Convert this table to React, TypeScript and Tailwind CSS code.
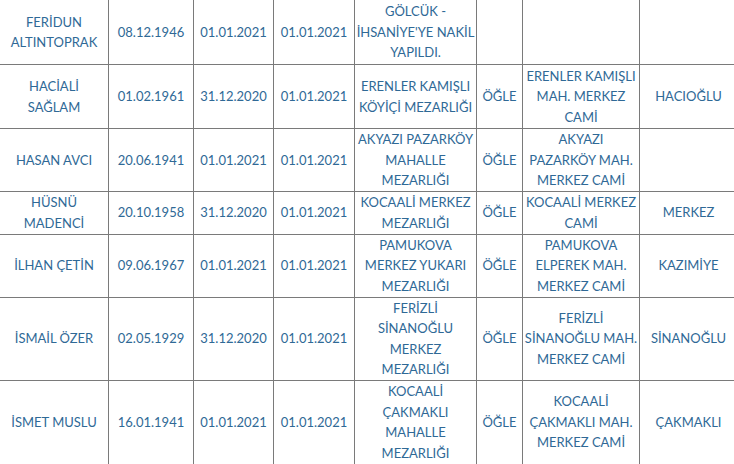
import React from "react";

const rows: { h: number; c: string[] }[] = [
  { h: 65, c: ["FERİDUN ALTINTOPRAK", "08.12.1946", "01.01.2021", "01.01.2021", "GÖLCÜK - İHSANİYE'YE NAKİL YAPILDI.", "", "", ""] },
  { h: 64, c: ["HACİALİ SAĞLAM", "01.02.1961", "31.12.2020", "01.01.2021", "ERENLER KAMIŞLI KÖYİÇİ MEZARLIĞI", "ÖĞLE", "ERENLER KAMIŞLI MAH. MERKEZ CAMİ", "HACIOĞLU"] },
  { h: 62, c: ["HASAN AVCI", "20.06.1941", "01.01.2021", "01.01.2021", "AKYAZI PAZARKÖY MAHALLE MEZARLIĞI", "ÖĞLE", "AKYAZI PAZARKÖY MAH. MERKEZ CAMİ", ""] },
  { h: 43, c: ["HÜSNÜ MADENCİ", "20.10.1958", "31.12.2020", "01.01.2021", "KOCAALİ MERKEZ MEZARLIĞI", "ÖĞLE", "KOCAALİ MERKEZ CAMİ", "MERKEZ"] },
  { h: 63, c: ["İLHAN ÇETİN", "09.06.1967", "01.01.2021", "01.01.2021", "PAMUKOVA MERKEZ YUKARI MEZARLIĞI", "ÖĞLE", "PAMUKOVA ELPEREK MAH. MERKEZ CAMİ", "KAZIMİYE"] },
  { h: 83, c: ["İSMAİL ÖZER", "02.05.1929", "31.12.2020", "01.01.2021", "FERİZLİ SİNANOĞLU MERKEZ MEZARLIĞI", "ÖĞLE", "FERİZLİ SİNANOĞLU MAH. MERKEZ CAMİ", "SİNANOĞLU"] },
  { h: 84, c: ["İSMET MUSLU", "16.01.1941", "01.01.2021", "01.01.2021", "KOCAALİ ÇAKMAKLI MAHALLE MEZARLIĞI", "ÖĞLE", "KOCAALİ ÇAKMAKLI MAH. MERKEZ CAMİ", "ÇAKMAKLI"] },
];

export default function App() {
  return (
    <div className="w-[734px] h-[464px] overflow-hidden bg-white">
      <table
        className="table-fixed border-collapse w-[738px] -ml-px -mt-px text-[13px] leading-[20.5px] text-[#2f6996]"
        style={{ fontFamily: "Lato, 'Open Sans', sans-serif" }}
      >
        <colgroup>
          <col className="w-[109px]" />
          <col className="w-[85px]" />
          <col className="w-[80px]" />
          <col className="w-[81px]" />
          <col className="w-[122px]" />
          <col className="w-[46px]" />
          <col className="w-[117px]" />
          <col className="w-[98px]" />
        </colgroup>
        <tbody>
          {rows.map((r, i) => (
            <tr key={i} style={{ height: r.h }}>
              {r.c.map((t, j) => (
                <td
                  key={j}
                  className={
                    j === 0
                      ? "border border-[#7a7a7a] px-[5px] py-0 text-center align-middle"
                      : "border border-[#7a7a7a] px-px py-0 text-center align-middle"
                  }
                >
                  {t}
                </td>
              ))}
            </tr>
          ))}
        </tbody>
      </table>
    </div>
  );
}
